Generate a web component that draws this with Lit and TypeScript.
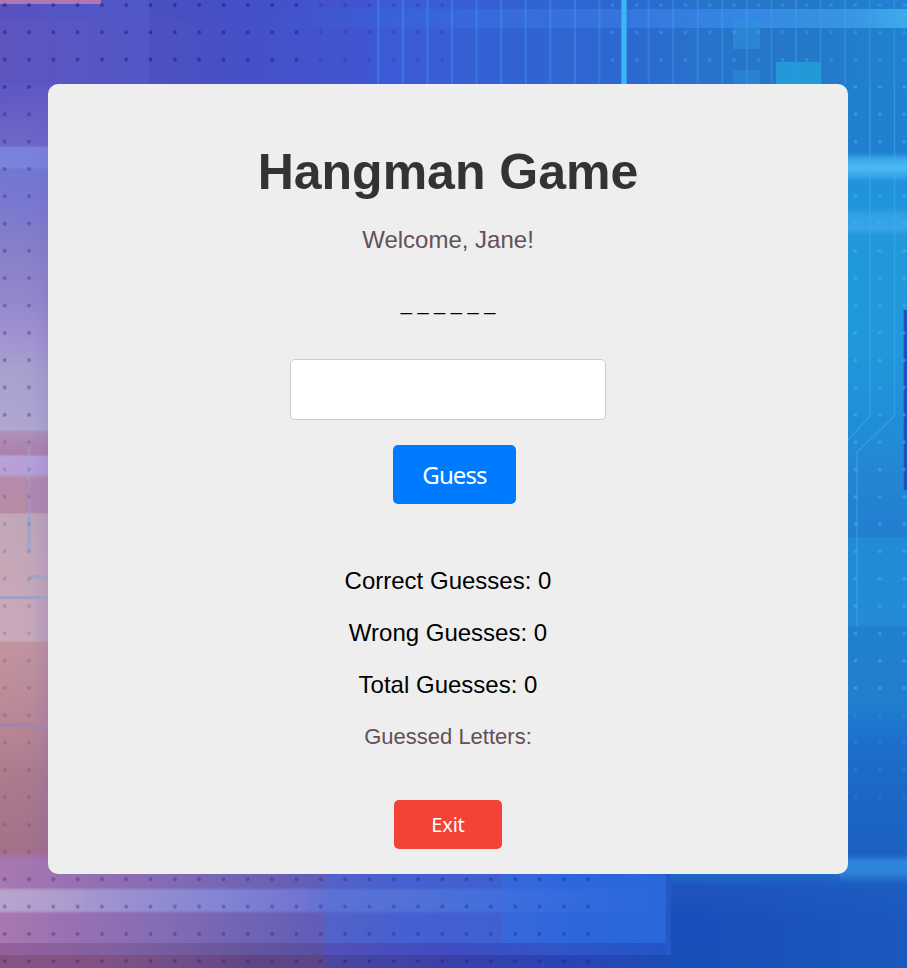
import { LitElement, html, svg, css } from "lit";
import { customElement, state } from "lit/decorators.js";

type Stop = [number, string, number?];

/** Linear gradient whose stops are given in canvas pixels along one axis. */
const gradient = (id: string, vertical: boolean, stops: Stop[]) => {
  const from = stops[0][0];
  const to = stops[stops.length - 1][0];
  return svg`<linearGradient id=${id} gradientUnits="userSpaceOnUse"
    x1=${vertical ? 0 : from} x2=${vertical ? 0 : to}
    y1=${vertical ? from : 0} y2=${vertical ? to : 0}>
    ${stops.map(([at, color, alpha]) => svg`<stop offset=${(at - from) / (to - from)} stop-color=${color} stop-opacity=${alpha ?? 1}></stop>`)}
  </linearGradient>`;
};

const box = (x: number, y: number, w: number, h: number, fill: string, opacity = 1) =>
  svg`<rect x=${x} y=${y} width=${w} height=${h} fill=${fill} opacity=${opacity}></rect>`;

const circuitLines = Array.from({ length: 22 }, (_, i) => 378.3 + i * 24.57).filter((x) => Math.abs(x - 624) > 4);

@customElement("tech-backdrop")
export class TechBackdrop extends LitElement {
  static styles = css`
    :host { display: block; }
    svg { display: block; width: 100%; height: 100%; }
  `;

  render() {
    return html`<svg viewBox="0 0 907 968" preserveAspectRatio="none" aria-hidden="true">
      <defs>
        ${gradient("top", false, [[0, "#5852be"], [60, "#5455c5"], [149, "#5056c8"], [150, "#4b4fc0"], [220, "#464fc5"], [300, "#4352cb"], [370, "#4055d0"], [378, "#3b5bd5"], [450, "#385ed5"], [540, "#3064d2"], [620, "#2c68d0"], [700, "#2872cc"], [800, "#2478c8"], [907, "#2082d2"]])}
        ${gradient("warm", false, [[0, "#6a5cc0", 0.5], [200, "#5a54c0", 0.2], [360, "#4058d0", 0]])}
        ${gradient("topBeam", false, [[250, "#3868e0", 0], [480, "#3a70e0", 0.7], [620, "#3878e0"], [740, "#3a8ce8"], [850, "#3c9ce8"], [907, "#46b4f2"]])}
        ${gradient("left", true, [[84, "#5c56c4"], [110, "#665ec4"], [146, "#6e68c8"], [147, "#7a80dc"], [168, "#7c84dc"], [169, "#7278d0"], [200, "#7878d0"], [250, "#8880c8"], [300, "#9488cc"], [345, "#a496d0"], [365, "#a8a0ce"], [430, "#b0a8d0"], [431, "#b092bc"], [443, "#ae88ae"], [454, "#aa82ac"], [457, "#b8a2d8"], [474, "#b8a0d4"], [478, "#b68cac"], [513, "#b88ca4"], [514, "#c2a8b8"], [580, "#c8a8b8"], [641, "#caaabb"], [642, "#c2959e"], [700, "#bd8b98"], [725, "#b98694"], [780, "#ad7a8c"], [852, "#a57088"], [860, "#a874b4"], [874, "#a878b4"]])}
        ${gradient("leftShade", false, [[0, "#6864d0", 0], [30, "#6864d0", 0.03], [50, "#6b58b8", 0.18]])}
        ${gradient("right", true, [[84, "#2080d0"], [150, "#2080d0"], [180, "#2092dc"], [250, "#2298dc"], [340, "#2298dc"], [410, "#2090d8"], [460, "#2388d6"], [537, "#227ed0"], [538, "#218cd6"], [600, "#228cd6"], [626, "#238ad8"], [627, "#2080d0"], [700, "#2080ce"], [740, "#1e70cc"], [800, "#1c66c4"], [852, "#1c62c2"], [874, "#1d64c4"]])}
        ${gradient("cyanBeam", true, [[153, "#48bcf4", 0], [160, "#44b0ee", 0.8], [168, "#4cbcf4"], [176, "#3cacec", 0.8], [183, "#30a0e4", 0]])}
        ${gradient("softBeam", true, [[208, "#40a8ec", 0], [215, "#3ca8ec", 0.6], [229, "#40acec", 0.7], [236, "#3aa4e8", 0]])}
        ${gradient("lowBeam", true, [[854, "#348ade", 0], [862, "#3088de", 0.9], [872, "#3088de", 0.9], [884, "#2876d0", 0]])}
        ${gradient("bottom", false, [[0, "#a878b0"], [80, "#9670b2"], [160, "#856cb4"], [240, "#7264b4"], [324, "#605cb8"], [326, "#5562c8"], [400, "#4660d0"], [500, "#4060d0"], [503, "#3868da"], [580, "#2c66dc"], [665, "#2868da"], [668, "#2254c4"], [710, "#1e50bc"], [800, "#1c54be"], [907, "#1b5cc0"]])}
        ${gradient("bottomBeam", false, [[0, "#bcaad4"], [60, "#b0a2d0"], [130, "#9a94d4"], [220, "#8488d8"], [300, "#7478d4"], [325, "#6076d8", 0.9], [430, "#5278dc", 0.8], [530, "#3c70e0", 0.8], [650, "#2e6ae0", 0.5]])}
        ${gradient("floor", false, [[0, "#865484"], [100, "#825284"], [180, "#704e88"], [260, "#5e4484"], [324, "#5b4688"], [326, "#4c46a0"], [450, "#3a40a8"], [560, "#2a44b4"], [670, "#1d4bb6"]])}
        ${gradient("floorStep", false, [[0, "#96609c"], [120, "#8060a0"], [240, "#66569c"], [324, "#5650a4"], [326, "#5350b8"], [440, "#414cc0"], [560, "#3056c8"], [652, "#2454c6"]])}
        ${gradient("bottomRight", true, [[874, "#226cc8"], [880, "#2060c2"], [886, "#1d55bd"], [920, "#194eba"], [968, "#184eb8"]])}
        ${gradient("edgeLight", false, [[700, "#1c68c4", 0], [907, "#1c68c4", 0.4]])}
        <pattern id="dots" patternUnits="userSpaceOnUse" x="-7.45" y="-8.66" width="24.31" height="27.32">
          <circle cx="12.15" cy="13.66" r="1.9" fill="#141470"></circle>
        </pattern>
        <pattern id="lights" patternUnits="userSpaceOnUse" x="-7.45" y="-8.66" width="24.31" height="27.32">
          <circle cx="12.15" cy="13.66" r="1.8" fill="#50b8f0"></circle>
        </pattern>
        <filter id="soften" x="-5%" y="-5%" width="110%" height="110%"><feGaussianBlur stdDeviation="0.6"></feGaussianBlur></filter>
        <filter id="glow" x="-5%" y="-20%" width="110%" height="140%"><feGaussianBlur stdDeviation="1.2"></feGaussianBlur></filter>
      </defs>

      ${box(0, 0, 907, 90, "url(#top)")}
      ${box(0, 20, 370, 70, "url(#warm)", 0.6)}
      <g filter="url(#soften)">
        ${box(250, 9, 663, 19, "url(#topBeam)", 0.8)}
        ${box(-3, -3, 104, 7, "#ae76b4")}
        ${circuitLines.map((x) => box(x - 1, -4, 2, 94, "#469ff0", 0.38))}
        ${box(733, 20, 27, 29, "#3294e0", 0.5)}
        ${box(733, 70, 27, 20, "#3294e0", 0.4)}
        ${box(776, 62, 45, 28, "#249cdc", 0.9)}
      </g>
      ${box(621, 0, 6, 90, "#2f9cec")}
      ${box(622, 0, 4, 90, "#3cb6f6")}

      ${box(0, 84, 60, 790, "url(#left)")}
      ${box(0, 84, 60, 790, "url(#leftShade)")}
      <g filter="url(#soften)">
        ${box(27, 447, 4, 66, "#a8a0d0", 0.4)}
        ${box(27, 513, 4, 38, "#9aa2cc", 0.7)}
        ${box(30, 575, 20, 4, "#a2a4c4")}
        ${box(-3, 596, 53, 3, "#a2a0c0")}
        ${box(36, 598, 14, 43, "#b49cb8", 0.55)}
        ${box(-3, 723, 53, 4, "#a684a6")}
        ${box(26, 480, 24, 32, "#a585b4", 0.5)}
      </g>

      ${box(836, 84, 71, 790, "url(#right)")}
      ${box(840, 153, 67, 30, "url(#cyanBeam)")}
      ${box(840, 208, 67, 28, "url(#softBeam)")}
      <g fill="none" stroke="#42acf0" stroke-width="1.5" opacity="0.5">
        <path d="M870 84V416L846 442"></path>
        <path d="M894.5 84V416L857 452V626"></path>
      </g>
      ${box(904, 310, 3, 180, "#1b50be")}
      ${box(903, 310, 1, 180, "#207bd0")}

      ${box(0, 865, 907, 103, "url(#bottom)")}
      ${box(668, 874, 239, 94, "url(#bottomRight)")}
      ${box(700, 874, 207, 94, "url(#edgeLight)")}
      ${box(840, 854, 67, 30, "url(#lowBeam)")}
      <g filter="url(#glow)">${box(-6, 889, 657, 23, "url(#bottomBeam)", 0.88)}</g>
      ${box(0, 943, 671, 12, "url(#floorStep)")}
      ${box(0, 955, 671, 13, "url(#floor)")}
      ${box(666, 874, 5, 81, "#2458c8")}

      ${box(0, 0, 300, 90, "url(#dots)", 0.5)}
      ${box(300, 0, 150, 90, "url(#dots)", 0.2)}
      ${box(0, 90, 50, 340, "url(#dots)", 0.34)}
      ${box(0, 430, 50, 444, "url(#dots)", 0.16)}
      ${box(0, 870, 590, 98, "url(#dots)", 0.33)}
      ${box(600, 0, 307, 84, "url(#lights)", 0.35)}
      ${box(840, 84, 67, 620, "url(#lights)", 0.5)}
      ${box(840, 704, 67, 100, "url(#lights)", 0.2)}
    </svg>`;
  }
}

@customElement("app-root")
export class AppRoot extends LitElement {
  @state() private player = "Jane";
  @state() private word: string[] = ["_", "_", "_", "_", "_", "_"];
  @state() private correct = 0;
  @state() private wrong = 0;
  @state() private guessed: string[] = [];

  static styles = css`
    :host {
      display: grid;
      height: 968px;
      overflow: hidden;
      font-family: "Liberation Sans", Arial, sans-serif;
      color: #000;
    }
    tech-backdrop, .page { grid-area: 1 / 1; min-height: 0; }
    .page { z-index: 1; padding: 84px 59px 94px 48px; }
    .card {
      box-sizing: border-box;
      display: flex;
      flex-direction: column;
      align-items: center;
      height: 790px;
      padding: 60px 24px 25px;
      border-radius: 10px;
      background: #eee;
    }
    h1, p { margin: 0; white-space: pre; }
    h1 { font-size: 50px; line-height: 56px; color: #333; }
    .welcome { margin-top: 26px; font-size: 24px; line-height: 28px; color: #645058; }
    .word { margin-top: 37px; margin-bottom: 1px; font-size: 20px; line-height: 24px; }
    .letter {
      box-sizing: border-box;
      width: 316px;
      height: 61px;
      margin-top: 43px;
      padding: 10px 20px;
      border: 1px solid #ccc;
      border-radius: 5px;
      background: #fff;
      font: 24px "Liberation Sans", Arial, sans-serif;
      outline: none;
    }
    button {
      padding: 0;
      border: 0;
      border-radius: 5px;
      color: #fff;
      font-family: "Noto Sans", "Open Sans", sans-serif;
    }
    .guess { width: 123px; height: 59px; margin: 25px 0 0 13px; background: #007bff; font-size: 24px; letter-spacing: -0.9px; }
    .stats {
      display: flex;
      flex-direction: column;
      align-items: center;
      gap: 24px;
      margin-top: 63px;
      font-size: 24px;
      line-height: 28px;
    }
    .letters { margin-top: 25px; font-size: 22px; line-height: 26px; color: #645058; }
    .exit { width: 108px; height: 49px; margin-top: 50px; background: #f44336; font-size: 20px; letter-spacing: -0.2px; }
  `;

  render() {
    return html`
      <tech-backdrop></tech-backdrop>
      <main class="page">
        <section class="card">
          <h1>Hangman Game</h1>
          <p class="welcome">Welcome, ${this.player}!</p>
          <p class="word">${this.word.join(" ")}</p>
          <input class="letter" type="text" maxlength="1" aria-label="Letter" />
          <button class="guess">Guess</button>
          <div class="stats">
            <p>Correct Guesses: ${this.correct}</p>
            <p>Wrong Guesses: ${this.wrong}</p>
            <p>Total Guesses: ${this.correct + this.wrong}</p>
          </div>
          <p class="letters">Guessed Letters:${this.guessed.map((l) => ` ${l}`)}</p>
          <button class="exit">Exit</button>
        </section>
      </main>
    `;
  }
}
